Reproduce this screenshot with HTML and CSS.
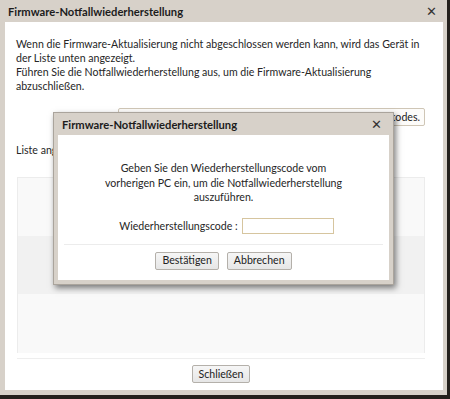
FILE: index.html
```html
<!Doctype html>
<html lang="de">
<head>
	<meta charset="utf-8">
	<title>Firmware-Notfallwiederherstellung</title>
	<link rel="stylesheet" href="styles.css">
</head>
<body>

	<div class="dialog">
		<div class="titlebar">
			<span class="title">Firmware-Notfallwiederherstellung</span>
			<span class="close">&#x2715;</span>
		</div>

		<div class="content">
			<p class="intro">
				Wenn die Firmware-Aktualisierung nicht abgeschlossen werden kann, wird das Gerät in der Liste unten angezeigt.<br>
				Führen Sie die Notfallwiederherstellung aus, um die Firmware-Aktualisierung abzuschließen.
			</p>

			<div class="code-row">
				<button class="btn wide">Notfallwiederherstellung mit Wiederherstellungscodes.</button>
			</div>

			<div class="list-label">Liste angeschlossener Geräte</div>

			<div class="list">
				<div class="row"></div>
				<div class="row alt"></div>
				<div class="row"></div>
			</div>

			<div class="footer">
				<button class="btn">Schließen</button>
			</div>

			<div class="modal">
				<div class="titlebar small">
					<span class="title">Firmware-Notfallwiederherstellung</span>
					<span class="close">&#x2715;</span>
				</div>
				<div class="modal-body">
					<p class="msg">
						Geben Sie den Wiederherstellungscode vom<br>
						vorherigen PC ein, um die Notfallwiederherstellung<br>
						auszuführen.
					</p>
					<div class="field">
						<label>Wiederherstellungscode :</label>
						<input type="text">
					</div>
					<div class="modal-buttons">
						<button class="btn">Bestätigen</button>
						<button class="btn">Abbrechen</button>
					</div>
				</div>
			</div>
		</div>
	</div>

</body>
</html>
```

FILE: styles.css
```css
html {
	background: #24201c;
}

body {
	margin: 0;
	font-family: "Lato", "Liberation Sans", sans-serif;
	font-size: 10.6px;
	color: #262626;
}

.dialog {
	width: 438px;
	height: 390px;
	padding: 0 4px 5px 5px;
	background: #d7d1c9;
}

.titlebar {
	height: 22px;
	display: flex;
	align-items: center;
	justify-content: space-between;
	padding: 0 6px 0 3px;
}

.title {
	font-weight: bold;
	font-size: 11.2px;
	color: #1c1c1c;
}

.close {
	font-size: 13px;
	color: #333;
}

.content {
	position: relative;
	height: 368px;
	background: #fff;
	padding: 0 13px 0 11px;
	box-sizing: border-box;
}

.intro {
	margin: 0;
	padding-top: 15px;
	line-height: 14px;
}

.code-row {
	display: flex;
	justify-content: flex-end;
	margin-top: 15px;
	padding-right: 5px;
}

.btn {
	font-family: inherit;
	font-size: 10.6px;
	color: #222;
	height: 18px;
	padding: 0 6px;
	border: 1px solid #b4b0aa;
	border-radius: 2px;
	background: linear-gradient(#f6f6f6, #e6e6e6);
	line-height: 15px;
	white-space: nowrap;
}

.wide {
	width: 307px;
	text-align: right;
	padding-right: 4px;
	overflow: hidden;
	background: #fdfcfa;
	border-color: #cfc6b6;
}

.list-label {
	margin-top: 17px;
	line-height: 14px;
}

.list {
	margin: 20px 5px 0 1px;
	height: 175px;
	border: 1px solid #ececec;
	border-bottom: none;
	background: #f9f9f9;
	display: flex;
	flex-direction: column;
}

.row {
	height: 58px;
}

.row.alt {
	background: #f1f1f1;
}

.footer {
	margin: 5px 5px 0 1px;
	border-top: 1px solid #eeeeee;
	display: flex;
	justify-content: center;
	padding-top: 6px;
}

.modal {
	position: absolute;
	left: 48px;
	top: 90px;
	width: 331px;
	height: 167px;
	padding: 0 4px 4px 4px;
	background: #d7d1c9;
	box-shadow: 2px 3px 6px rgba(0, 0, 0, 0.5);
	border: 1px solid #aaa49c;
}

.titlebar.small {
	padding: 0 7px 0 4px;
}

.modal-body {
	background: #fff;
	height: 145px;
	padding-top: 26px;
	box-sizing: border-box;
}

.msg {
	margin: 0;
	text-align: center;
	line-height: 14.5px;
}

.field {
	display: flex;
	justify-content: center;
	align-items: center;
	gap: 4px;
	margin-top: 13px;
	padding-left: 6px;
}

.field input {
	width: 86px;
	height: 14px;
	border: 1px solid #d6c59f;
	padding: 0 2px;
}

.modal-buttons {
	margin: 10px 6px 0 6px;
	border-top: 1px solid #ececec;
	padding-top: 7px;
	display: flex;
	justify-content: center;
	gap: 8px;
}
```
